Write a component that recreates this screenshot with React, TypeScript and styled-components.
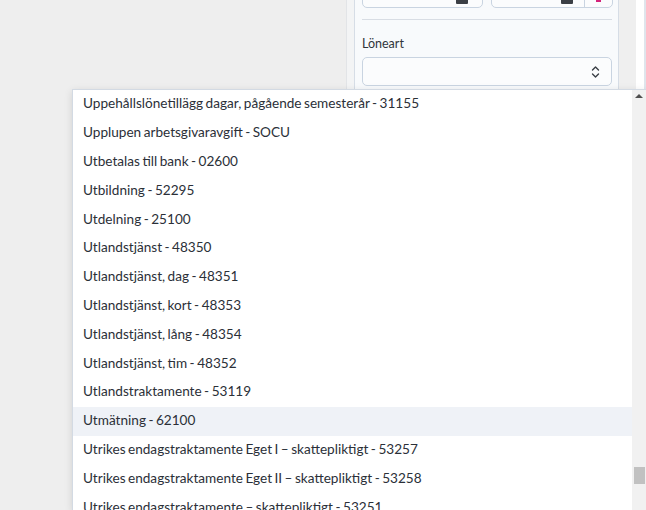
import styled, { createGlobalStyle } from "styled-components";

const GlobalStyle = createGlobalStyle`
  html, body {
    margin: 0;
    padding: 0;
    height: 100%;
    overflow: hidden;
    background: #eeeeee;
    font-family: Lato, "Liberation Sans", sans-serif;
  }
  #root {
    height: 100%;
  }
`;

const options = [
  "Uppehållslönetillägg dagar, pågående semesterår - 31155",
  "Upplupen arbetsgivaravgift - SOCU",
  "Utbetalas till bank - 02600",
  "Utbildning - 52295",
  "Utdelning - 25100",
  "Utlandstjänst - 48350",
  "Utlandstjänst, dag - 48351",
  "Utlandstjänst, kort - 48353",
  "Utlandstjänst, lång - 48354",
  "Utlandstjänst, tim - 48352",
  "Utlandstraktamente - 53119",
  "Utmätning - 62100",
  "Utrikes endagstraktamente Eget I – skattepliktigt - 53257",
  "Utrikes endagstraktamente Eget II – skattepliktigt - 53258",
  "Utrikes endagstraktamente – skattepliktigt - 53251",
];

export default function App() {
  return (
    <>
      <GlobalStyle />
      <Page>
        <Canvas />
        <Sidebar>
          <Panel>
            <InputRow>
              <Field iconGap={14}>
                <FieldIcon />
              </Field>
              <Field iconGap={39}>
                <FieldIcon />
                <Addon>
                  <Mark />
                </Addon>
              </Field>
            </InputRow>
            <Divider />
            <Label>Löneart</Label>
            <Select>
              <svg width="9" height="14" viewBox="0 0 9 14" fill="none">
                <path
                  d="M1.5 5 L4.5 2 L7.5 5 M1.5 9 L4.5 12 L7.5 9"
                  stroke="#3a3f46"
                  strokeWidth="1.4"
                  strokeLinecap="round"
                  strokeLinejoin="round"
                />
              </svg>
            </Select>
          </Panel>
        </Sidebar>
        <Gutter />
        <EdgeStrip />

        <Dropdown>
          <List>
            {options.map((label, idx) => (
              <Item key={label} active={idx === 11}>
                {label}
              </Item>
            ))}
          </List>
          <ScrollTrack>
            <ArrowUp />
            <Thumb />
          </ScrollTrack>
        </Dropdown>
      </Page>
    </>
  );
}

const Page = styled.div`
  position: relative;
  display: flex;
  height: 100%;
`;

const Canvas = styled.div`
  width: 346px;
  flex: none;
  background: #eeeeee;
`;

const Sidebar = styled.div`
  width: 273px;
  flex: none;
  padding-left: 7px;
  box-sizing: border-box;
  background: #f3f4f5;
  border-left: 1px solid #e2e4e7;
`;

const Panel = styled.div`
  height: 100%;
  box-sizing: border-box;
  background: #f8fafc;
  border-left: 1px solid #d6dde6;
  border-right: 1px solid #d6dde6;
  padding: 0 6px 0 7px;
  margin-top: -22px;
  display: flex;
  flex-direction: column;
`;

const InputRow = styled.div`
  display: grid;
  grid-template-columns: 121px 122px;
  gap: 8px;
`;

const Field = styled.div<{ iconGap: number }>`
  height: 30px;
  box-sizing: border-box;
  border: 1px solid #c9d4e1;
  border-radius: 5px;
  background: #fbfcfd;
  display: flex;
  align-items: flex-end;
  justify-content: flex-end;
  padding: 0 ${(p) => p.iconGap}px 3px 0;
  position: relative;
`;

const FieldIcon = styled.span`
  width: 12px;
  height: 4px;
  background: #3b3f45;
  border-radius: 0 0 1px 1px;
`;

const Addon = styled.span`
  position: absolute;
  right: 0;
  top: 0;
  bottom: 0;
  width: 28px;
  border-left: 1px solid #c9d4e1;
  display: flex;
  align-items: flex-end;
  justify-content: center;
  padding-bottom: 5px;
  box-sizing: border-box;
`;

const Mark = styled.span`
  width: 5px;
  height: 3px;
  background: #d4237a;
`;

const Divider = styled.div`
  height: 1px;
  background: #d8dde4;
  margin: 11px 0 0;
`;

const Label = styled.div`
  margin-top: 16px;
  font-size: 12.5px;
  color: #30353b;
  line-height: 16px;
`;

const Select = styled.div`
  margin-top: 5px;
  height: 29px;
  box-sizing: border-box;
  border: 1px solid #c9d4e1;
  border-radius: 5px;
  background: #fbfcfd;
  display: flex;
  align-items: center;
  justify-content: flex-end;
  padding-right: 11px;
`;

const Gutter = styled.div`
  width: 17px;
  flex: none;
  background: #efefef;
`;

const EdgeStrip = styled.div`
  flex: 1;
  background: #ffffff;
  border-right: 2px solid #dfe5ec;
  max-width: 8px;
`;

const Dropdown = styled.div`
  position: absolute;
  left: 72px;
  top: 89px;
  right: 0;
  bottom: 0;
  display: flex;
  background: #ffffff;
  border-top: 1px solid #d3dae3;
  border-left: 1px solid #d3dae3;
  box-shadow: 0 2px 8px rgba(0, 0, 0, 0.12);
  overflow: hidden;
`;

const List = styled.div`
  flex: 1;
  display: flex;
  flex-direction: column;
`;

const Item = styled.div<{ active?: boolean }>`
  height: 28.8px;
  box-sizing: border-box;
  flex: none;
  display: flex;
  align-items: center;
  padding: 0 0 2px 10px;
  font-size: 13.6px;
  word-spacing: -1px;
  color: #2b3038;
  white-space: nowrap;
  background: ${(p) => (p.active ? "#eff2f7" : "#ffffff")};
`;

const ScrollTrack = styled.div`
  width: 14px;
  flex: none;
  background: #f1f1f1;
  position: relative;
`;

const ArrowUp = styled.div`
  position: absolute;
  top: 4px;
  left: 3px;
  width: 0;
  height: 0;
  border-left: 4px solid transparent;
  border-right: 4px solid transparent;
  border-bottom: 4px solid #505050;
`;

const Thumb = styled.div`
  position: absolute;
  top: 377px;
  left: 2px;
  width: 11px;
  height: 17px;
  background: #c1c1c1;
`;
